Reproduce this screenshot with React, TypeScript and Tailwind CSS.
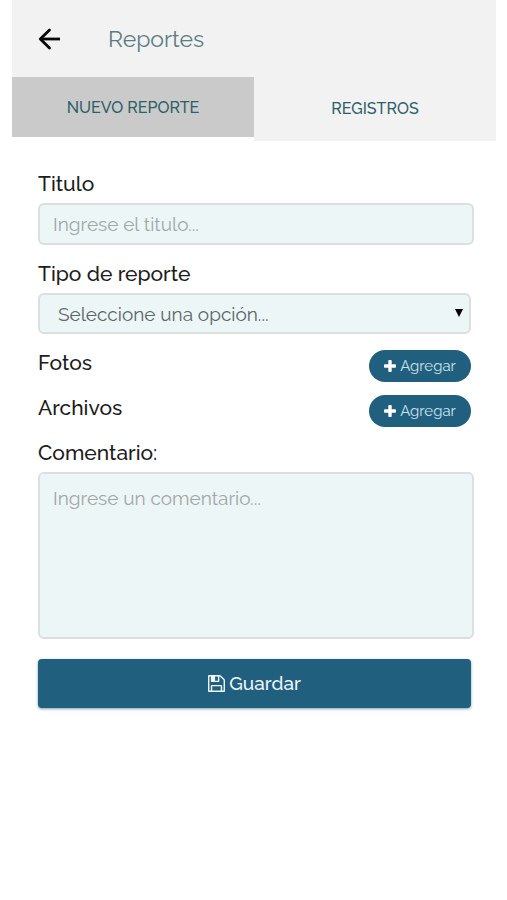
import { useState } from "react";

const field =
  "block rounded-md border-2 border-[#dcdfdf] bg-[#edf6f6] text-[19px] leading-6 focus:outline-none";
const label = "block text-[21px] leading-7 font-medium text-[#1c1c1c]";

function SaveIcon() {
  return (
    <svg viewBox="0 128 1536 1536" className="h-[17px] w-[17px]" fill="currentColor" aria-hidden="true">
      <path d="M384 1536h768v-384H384v384zm896 0h128V640q0-14-10-38.5t-20-34.5l-281-281q-10-10-34-20t-39-10v416q0 40-28 68t-68 28H352q-40 0-68-28t-28-68V256H128v1280h128v-416q0-40 28-68t68-28h832q40 0 68 28t28 68v416zM896 608V288q0-13-9.5-22.5T864 256H672q-13 0-22.5 9.5T640 288v320q0 13 9.5 22.5T672 640h192q13 0 22.5-9.5T896 608zm640 32v928q0 40-28 68t-68 28H96q-40 0-68-28t-28-68V224q0-40 28-68t68-28h928q40 0 88 20t76 48l280 280q28 28 48 76t20 88z" />
    </svg>
  );
}

function AddRow({ name }: { name: string }) {
  return (
    <div className="mr-[3px] flex h-[45px] items-start justify-between">
      <span className={label}>{name}</span>
      <button
        type="button"
        aria-label={`Agregar ${name}`}
        className="mt-px flex h-8 w-[102px] items-center justify-center gap-1 rounded-full bg-[#215f7e] text-[15px] text-[#c9e3ee]"
      >
        <svg viewBox="0 0 12 12" className="h-3 w-3" fill="#fff" aria-hidden="true">
          <rect x="4.3" y="0" width="3.4" height="12" rx="0.8" />
          <rect x="0" y="4.3" width="12" height="3.4" rx="0.8" />
        </svg>
        Agregar
      </button>
    </div>
  );
}

export default function App() {
  const [tab, setTab] = useState("nuevo");
  const [titulo, setTitulo] = useState("");
  const [tipo, setTipo] = useState("");
  const [comentario, setComentario] = useState("");

  const tabClass = (name: string) =>
    tab === name
      ? "h-[60px] flex-1 bg-[#cacaca] pt-0.5"
      : "h-16 flex-1 bg-[#f2f2f2]";

  return (
    <div className="min-h-screen bg-white pr-[11px] pl-3 font-['Raleway','Lato',sans-serif]">
      <header className="flex h-[77px] items-center bg-[#f2f2f2] pl-[26px]">
        <button type="button" aria-label="Volver">
          <svg
            viewBox="0 0 22 22"
            className="h-[22px] w-[22px]"
            fill="none"
            stroke="#080808"
            strokeWidth="2.8"
            strokeLinecap="round"
            strokeLinejoin="round"
          >
            <path d="M11.5 2 2.3 11l9.2 9" />
            <path d="M2.5 11H22" strokeLinecap="butt" />
          </svg>
        </button>
        <h1 className="ml-12 text-[23px] leading-9 text-[#5b7d82]">Reportes</h1>
      </header>

      <nav className="flex items-start text-base font-medium text-[#2c5f66]">
        <button type="button" className={tabClass("nuevo")} onClick={() => setTab("nuevo")}>
          NUEVO REPORTE
        </button>
        <button type="button" className={tabClass("registros")} onClick={() => setTab("registros")}>
          REGISTROS
        </button>
      </nav>

      <form className="pt-[29px] pr-[22px] pl-[26px]" onSubmit={(e) => e.preventDefault()}>
        <label htmlFor="titulo" className={label}>
          Titulo
        </label>
        <input
          id="titulo"
          type="text"
          placeholder="Ingrese el titulo..."
          className={`${field} mt-[5px] h-[42px] w-full px-[13px] placeholder:text-[#9fa8a8]`}
          value={titulo}
          onChange={(e) => setTitulo(e.target.value)}
        />

        <label htmlFor="tipo" className={`${label} mt-[15px]`}>
          Tipo de reporte
        </label>
        <div className="relative mt-[5px] mr-[3px]">
          <select
            id="tipo"
            className={`${field} h-[41px] w-full appearance-none px-[18px] text-[#5c6666]`}
            value={tipo}
            onChange={(e) => setTipo(e.target.value)}
          >
            <option value="">Seleccione una opción...</option>
          </select>
          <svg
            viewBox="0 0 8 8"
            className="pointer-events-none absolute top-4 right-2 h-2 w-2"
            aria-hidden="true"
          >
            <path d="M0 0h8L4 8z" fill="#000" />
          </svg>
        </div>

        <div className="pt-[15px]">
          <AddRow name="Fotos" />
          <AddRow name="Archivos" />
        </div>

        <label htmlFor="comentario" className={label}>
          Comentario:
        </label>
        <textarea
          id="comentario"
          placeholder="Ingrese un comentario..."
          className={`${field} mt-[5px] h-[167px] w-full resize-none px-[13px] py-3 placeholder:text-[#9fa8a8]`}
          value={comentario}
          onChange={(e) => setComentario(e.target.value)}
        />

        <div className="mt-5 mr-[3px]">
          <button
            type="submit"
            className="flex h-[49px] w-full items-center justify-center gap-1 rounded-sm bg-[#215f7e] text-[19px] font-medium text-[#eef7fb] shadow-[0_1px_3px_#7f9fb0]"
          >
            <SaveIcon />
            Guardar
          </button>
        </div>
      </form>
    </div>
  );
}
